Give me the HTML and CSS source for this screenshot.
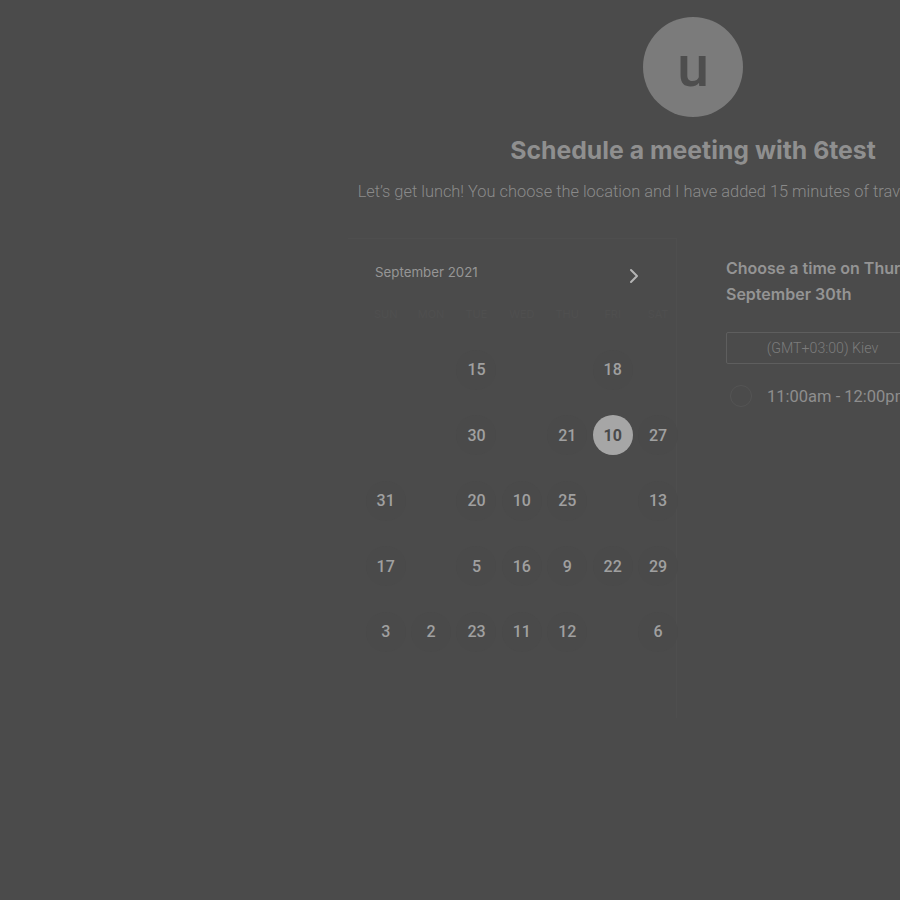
FILE: index.html
```html
<!DOCTYPE html>
<html>
<head>
<meta charset="utf-8">
<link rel="stylesheet" href="styles.css">
</head>
<body>
<div class="page">
  <div class="avatar">u</div>
  <h1 class="title">Schedule a meeting with 6test</h1>
  <p class="subtitle">Let’s get lunch! You choose the location and I have added 15 minutes of travel time either way.</p>
  <div class="booking">
    <div class="calendar">
      <div class="cal-head">
        <span class="month">September 2021</span>
        <svg class="next" width="10" height="16" viewBox="0 0 10 16"><polyline points="2,2 8,8 2,14" fill="none" stroke="#b4b4b4" stroke-width="2" stroke-linecap="round" stroke-linejoin="round"/></svg>
      </div>
      <div class="grid weekdays">
        <span>SUN</span><span>MON</span><span>TUE</span><span>WED</span><span>THU</span><span>FRI</span><span>SAT</span>
      </div>
      <div class="grid days">
        <span></span><span></span><span class="d">15</span><span></span><span></span><span class="d">18</span><span></span>
        <span></span><span></span><span class="d">30</span><span></span><span class="d">21</span><span class="d sel">10</span><span class="d">27</span>
        <span class="d">31</span><span></span><span class="d">20</span><span class="d">10</span><span class="d">25</span><span></span><span class="d">13</span>
        <span class="d">17</span><span></span><span class="d">5</span><span class="d">16</span><span class="d">9</span><span class="d">22</span><span class="d">29</span>
        <span class="d">3</span><span class="d">2</span><span class="d">23</span><span class="d">11</span><span class="d">12</span><span></span><span class="d">6</span>
      </div>
    </div>
    <div class="times">
      <div class="times-title">Choose a time on Thursday,<br>September 30th</div>
      <div class="tz">(GMT+03:00) Kiev</div>
      <div class="slot"><span class="radio"></span><span class="slot-text">11:00am - 12:00pm</span></div>
    </div>
  </div>
</div>
</body>
</html>
```

FILE: styles.css
```css
html, body {
  margin: 0;
  padding: 0;
  background: #4b4b4b;
  width: 900px;
  height: 900px;
  overflow: hidden;
}
.page {
  width: 690px;
  margin-left: 348px;
  display: flex;
  flex-direction: column;
  align-items: center;
}
.avatar {
  margin-top: 17px;
  width: 100px;
  height: 100px;
  border-radius: 50%;
  background: #7b7b7b;
  color: #4e4e4e;
  font-family: Roboto, sans-serif;
  font-weight: 500;
  font-size: 57px;
  line-height: 100px;
  text-align: center;
}
.title {
  margin: 18px 0 0;
  font-family: Inter, sans-serif;
  font-weight: 700;
  font-size: 24.8px;
  line-height: 30px;
  color: #8f8f8f;
  white-space: nowrap;
}
.subtitle {
  margin: 17px 0 0;
  font-family: Roboto, sans-serif;
  font-weight: 300;
  font-size: 16.4px;
  line-height: 20px;
  color: #8a8a8a;
  white-space: nowrap;
  text-align: center;
}
.booking {
  margin-top: 36px;
  align-self: stretch;
  display: flex;
}
.calendar {
  width: 329px;
  height: 480px;
  border-top: 1px solid #4e4e4e;
  border-right: 1px solid #4e4e4e;
  box-sizing: border-box;
  padding-left: 1px;
}
.cal-head {
  display: flex;
  align-items: center;
  justify-content: space-between;
  padding: 23px 37px 0 26px;
  height: 20px;
}
.month {
  font-family: Inter, sans-serif;
  font-size: 13.3px;
  color: #969696;
  line-height: 20px;
}
.next {
  margin-top: 8px;
}
.grid {
  display: grid;
  grid-template-columns: repeat(7, 45.4px);
  margin-left: 14px;
}
.weekdays {
  margin-top: 25px;
  height: 14px;
}
.weekdays span {
  font-family: Inter, sans-serif;
  font-size: 11px;
  line-height: 14px;
  text-align: center;
  color: #4f4f4f;
}
.days {
  margin-top: 16px;
  grid-auto-rows: 65.5px;
}
.days span {
  display: flex;
  align-items: center;
  justify-content: center;
}
.days .d {
  width: 40px;
  height: 40px;
  margin: 0 auto;
  align-self: center;
  border-radius: 50%;
  background: #4a4a4a;
  font-family: Roboto, sans-serif;
  font-weight: 500;
  font-size: 16px;
  color: #a0a0a0;
}
.days .sel {
  background: #a6a6a6;
  color: #4a4a4a;
  font-weight: 700;
}
.times {
  padding: 17px 0 0 49px;
  flex: 1;
}
.times-title {
  font-family: Inter, sans-serif;
  font-weight: 600;
  font-size: 16px;
  line-height: 26px;
  color: #949494;
  white-space: nowrap;
}
.tz {
  margin-top: 25px;
  width: 193px;
  height: 32px;
  box-sizing: border-box;
  border: 1px solid #5e5e5e;
  border-radius: 2px;
  font-family: Roboto, sans-serif;
  font-weight: 300;
  font-size: 14.2px;
  line-height: 30px;
  text-align: center;
  color: #7c7c7c;
}
.slot {
  margin-top: 21px;
  display: flex;
  align-items: center;
  padding-left: 4px;
}
.radio {
  width: 22px;
  height: 22px;
  border-radius: 50%;
  border: 1px solid #545454;
  box-sizing: border-box;
}
.slot-text {
  margin-left: 15px;
  font-family: Roboto, sans-serif;
  font-size: 16.5px;
  color: #8e8e8e;
  white-space: nowrap;
}
```
